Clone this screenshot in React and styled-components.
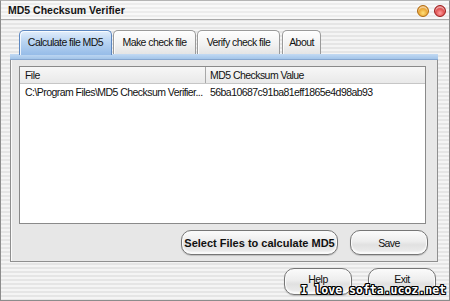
import React from 'react';
import styled, { createGlobalStyle } from 'styled-components';

const SANS = '"Liberation Sans", Arial, sans-serif';

const Global = createGlobalStyle`
  html, body { margin: 0; padding: 0; }
  body { width: 450px; height: 301px; overflow: hidden; font-family: ${SANS}; background: #fff; }
`;

const narrowText = `
  font-family: ${SANS};
  font-size: 10.5px;
  letter-spacing: -0.55px;
  color: #111;
`;

const Window = styled.div`
  position: relative;
  width: 450px;
  height: 301px;
  box-sizing: border-box;
  border: 1px solid #8c8c8c;
  border-top-color: #b4b4b4;
  background: repeating-linear-gradient(to bottom, #f4f4f4 0px, #f4f4f4 2px, #e5e5e5 2px, #e5e5e5 4px);
  display: flex;
  flex-direction: column;
`;

const TitleBar = styled.div`
  height: 18px;
  flex: none;
  display: flex;
  align-items: center;
  padding: 0 3px 0 7px;
  border-bottom: 1px solid #a9a9a9;
  background: repeating-linear-gradient(to bottom, #f8f8f8 0px, #f8f8f8 2px, #ececec 2px, #ececec 4px);
`;

const Title = styled.div`
  flex: 1;
  font-family: ${SANS};
  font-weight: bold;
  font-size: 10.5px;
  color: #151515;
`;

const Lights = styled.div`
  display: flex;
  gap: 5px;
  padding-top: 2px;
`;

const Light = styled.span`
  width: 10px;
  height: 10px;
  border-radius: 50%;
  border: 1px solid ${p => p.$edge};
  background: radial-gradient(circle at 50% 70%, ${p => p.$glow} 0%, ${p => p.$base} 75%);
  box-shadow: inset 0 2px 1px rgba(255,255,255,0.55);
`;

const Body = styled.div`
  flex: 1;
  display: flex;
  flex-direction: column;
  padding: 10px 11px 0 9px;
`;

const TabRow = styled.div`
  display: flex;
  gap: 1px;
  padding-left: 9px;
  height: 24px;
  position: relative;
  z-index: 1;
`;

const Tab = styled.div`
  ${narrowText}
  width: ${p => p.$w}px;
  box-sizing: border-box;
  height: ${p => (p.$active ? 25 : 24)}px;
  margin-right: ${p => p.$gap || 0}px;
  display: flex;
  align-items: center;
  justify-content: center;
  padding-bottom: 2px;
  border: 1px solid ${p => (p.$active ? '#5d87c0' : '#9a9a9a')};
  border-bottom: none;
  border-radius: 5px 5px 0 0;
  background: ${p =>
    p.$active
      ? 'linear-gradient(to bottom, #e2eefb 0%, #b9d4f2 45%, #96bce8 100%)'
      : 'linear-gradient(to bottom, #fefefe 0%, #f1f1f1 60%, #e4e4e4 100%)'};
  box-shadow: inset 1px 1px 0 rgba(255,255,255,0.8);
`;

const Panel = styled.div`
  height: 208px;
  box-sizing: border-box;
  display: flex;
  flex-direction: column;
  border: 1px solid #8f8f8f;
  border-top: none;
  background: #e7e7e7;
  box-shadow: inset 1px 0 0 #fbfbfb;
`;

const PanelBand = styled.div`
  height: 5px;
  margin: 0 -1px;
  background: linear-gradient(to bottom, #c3daf3 0%, #a2c4e9 100%);
  border-bottom: 1px solid #86a6cf;
`;

const List = styled.div`
  margin: 6px 11px 0 8px;
  height: 158px;
  box-sizing: border-box;
  border: 1px solid #8a8a8a;
  background: #fff;
  display: flex;
  flex-direction: column;
`;

const ListHeader = styled.div`
  display: grid;
  grid-template-columns: 185px 1fr;
  height: 17px;
  box-sizing: border-box;
  border-bottom: 1px solid #c6c6c6;
  background: linear-gradient(to bottom, #f7f7f7, #e9e9e9);
`;

const HeadCell = styled.div`
  ${narrowText}
  display: flex;
  align-items: center;
  padding-left: ${p => p.$pad}px;
  border-left: ${p => (p.$sep ? '1px solid #a8a8a8' : 'none')};
`;

const Row = styled.div`
  display: grid;
  grid-template-columns: 185px 1fr;
  height: 16px;
  align-items: center;
`;

const Cell = styled.div`
  ${narrowText}
  padding-left: ${p => p.$pad}px;
  white-space: nowrap;
  overflow: hidden;
`;

const ButtonRow = styled.div`
  display: flex;
  justify-content: flex-end;
  gap: 12px;
  margin-top: 6px;
  padding-right: 9px;
`;

const Button = styled.div`
  ${narrowText}
  width: ${p => p.$w}px;
  height: ${p => p.$h}px;
  box-sizing: border-box;
  display: flex;
  align-items: center;
  justify-content: center;
  padding-bottom: ${p => p.$lift || 0}px;
  border: 1px solid #767676;
  border-radius: 10px;
  background: linear-gradient(to bottom, #fbfbfb 0%, #ededed 45%, #e1e1e1 60%, #eeeeee 100%);
  box-shadow: inset 0 0 0 1px #fafafa, inset 0 -2px 2px rgba(255,255,255,0.9), 0 1px 1px rgba(0,0,0,0.18);
  ${p => p.$bold && 'font-weight: bold; font-size: 11px; letter-spacing: 0;'}
`;

const Footer = styled.div`
  display: flex;
  justify-content: flex-end;
  gap: 16px;
  margin-top: 6px;
  padding-right: 2px;
`;

const Watermark = styled.div`
  position: absolute;
  right: 3px;
  bottom: 4px;
  font-family: "DejaVu Sans Mono", "Liberation Mono", monospace;
  font-weight: bold;
  font-size: 11.5px;
  line-height: 12px;
  color: #fff;
  text-shadow:
    1px 0 0 #000, -1px 0 0 #000, 0 1px 0 #000, 0 -1px 0 #000,
    1px 1px 0 #000, -1px -1px 0 #000, 1px -1px 0 #000, -1px 1px 0 #000;
`;

export default function App() {
  return (
    <>
      <Global />
      <Window>
        <TitleBar>
          <Title>MD5 Checksum Verifier</Title>
          <Lights>
            <Light $base="#e08a10" $glow="#ffe07a" $edge="#b06a10" />
            <Light $base="#d02828" $glow="#ffa0a0" $edge="#9a1a1a" />
          </Lights>
        </TitleBar>
        <Body>
          <TabRow>
            <Tab $w={93} $active>Calculate file MD5</Tab>
            <Tab $w={83}>Make check file</Tab>
            <Tab $w={83} $gap={1}>Verify check file</Tab>
            <Tab $w={39}>About</Tab>
          </TabRow>
          <Panel>
            <PanelBand />
            <List>
              <ListHeader>
                <HeadCell $pad={5}>File</HeadCell>
                <HeadCell $pad={4} $sep>MD5 Checksum Value</HeadCell>
              </ListHeader>
              <Row>
                <Cell $pad={5}>C:\Program Files\MD5 Checksum Verifier...</Cell>
                <Cell $pad={5}>56ba10687c91ba81eff1865e4d98ab93</Cell>
              </Row>
            </List>
            <ButtonRow>
              <Button $w={157} $h={25} $bold>Select Files to calculate MD5</Button>
              <Button $w={78} $h={25}>Save</Button>
            </ButtonRow>
          </Panel>
          <Footer>
            <Button $w={68} $h={27} $lift={6}>Help</Button>
            <Button $w={68} $h={27} $lift={6}>Exit</Button>
          </Footer>
        </Body>
        <Watermark>I love softa.ucoz.net</Watermark>
      </Window>
    </>
  );
}
